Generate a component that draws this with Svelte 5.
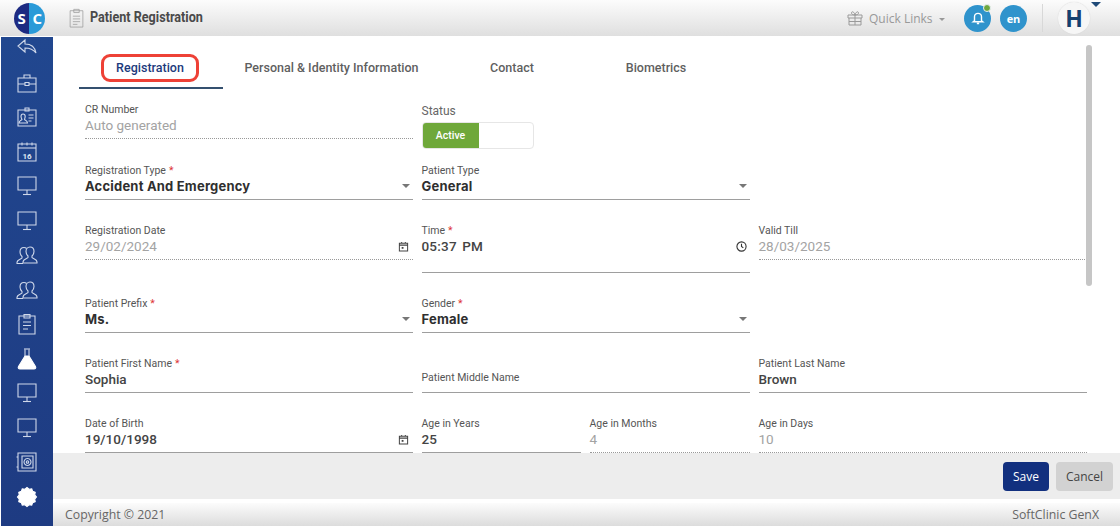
<script>
  const monitor = ['M3 3h18v13H3z', 'M12 16v4', 'M8 20.500h8'];
  const people = [
    'M15 4c2.500 0 4 2 4 4.500 0 2-1 3.500-2 4.500v1.500c.5 1 5 1.500 5 4.500v1H8v-1c0-3 4.500-3.500 5-4.500V13c-1-1-2-2.500-2-4.500C11 6 12.500 4 15 4z',
    'M11.500 5.500C10.800 4.800 10 4.500 9 4.500 6.500 4.500 5 6.500 5 9c0 2 1 3.500 2 4.500V15c-.5 1-5 1.500-5 4.500v1h6'
  ];
  const sideIcons = [
    { paths: ['M10 4 3 10l7 6v-4c5 0 8 1 11 5-1-6-5-9-11-9z'] },
    { paths: ['M3 7h18v14H3z', 'M9 7V4h6v3', 'M3 13h7M14 13h7', 'M10 11.500h4v3h-4z'] },
    { paths: ['M3 5h18v16H3z', 'M10 3h4v3h-4z', 'M13.500 10h5M13.500 13h5M13.500 16h3', 'M8 9c1.500 0 2.200 1.200 2.200 2.500S9.500 14 9.500 14.500c.5 1 3 1 3 3.500H4c0-2.500 2.500-2.500 3-3.500 0-.5-1-1.700-1-3S6.500 9 8 9z'] },
    { paths: ['M3 4h18v17H3z', 'M3 8h18', 'M7 2.500v3M12 2.500v3M17 2.500v3'], label: '16' },
    { paths: monitor },
    { paths: monitor },
    { paths: people },
    { paths: people },
    { paths: ['M4 4h16v18H4z', 'M9 2.500h6V6H9z', 'M8 10h8M8 13.500h8M8 17h5'] },
    { paths: ['M9 2h6', 'M10 2.500V9M14 2.500V9'], solid: 'M10 9h4l6.500 10.500c.7 1.300 0 2.500-1.500 2.500H5c-1.500 0-2.200-1.200-1.500-2.500z' },
    { paths: monitor },
    { paths: monitor },
    { paths: ['M3 3h18v18H3z', 'M3 7H1.500M3 17H1.500', 'M7 6h11v12H7z', 'M12.500 8.500a3.500 3.500 0 1 0 .01 0z', 'M12.500 10.800a1.200 1.200 0 1 0 .01 0z'] },
    { gear: true }
  ];
  const gearPoints = Array.from({ length: 24 }, (_, i) => {
    const r = i % 2 ? 8 : 9.5;
    const a = (i * Math.PI) / 12;
    return `${(12 + r * Math.cos(a)).toFixed(2)},${(12 + r * Math.sin(a)).toFixed(2)}`;
  }).join(' ');

  const tabs = [
    { label: 'Registration', w: 144, active: true },
    { label: 'Personal & Identity Information', w: 217 },
    { label: 'Contact', w: 144 },
    { label: 'Biometrics', w: 144 }
  ];
</script>

{#snippet field(label, value, opts = {})}
  <div class="field {opts.kind ?? 'text'}" class:tall={opts.tall}>
    <span class="label">{label}{#if opts.req}<i>*</i>{/if}</span>
    <div class="value">
      <span>{value}</span>
      {#if opts.kind === 'select'}<b class="caret"></b>{/if}
      {#if opts.icon === 'date'}
        <svg class="end" viewBox="0 0 24 24" width="11" height="11" fill="none" stroke="#444" stroke-width="2.200"><path d="M3 5h18v17H3zM3 9h18M8 2v4M16 2v4"/><path d="M8 13h4v4H8z" fill="#444" stroke="none"/></svg>
      {/if}
      {#if opts.icon === 'clock'}
        <svg class="end clock" viewBox="0 0 24 24" width="11" height="11" fill="none" stroke="#333" stroke-width="2.400"><circle cx="12" cy="12" r="10"/><path d="M12 6v6l4 3"/></svg>
      {/if}
    </div>
  </div>
{/snippet}

<div class="app">
  <header>
    <div class="logo"><span>S</span><span>C</span></div>
    <svg class="clip" viewBox="0 0 16 22" width="15" height="20" fill="none" stroke="#999" stroke-width="0.800"><path d="M1 3h14v18H1z"/><path d="M5 1.500h6V5H5zM4 9h8M4 12h8M4 15h8M4 18h5"/></svg>
    <h1>Patient Registration</h1>
    <div class="quick">
      <svg viewBox="0 0 16 16" width="16" height="16" fill="none" stroke="#9a9a9a" stroke-width="1"><path d="M1 5h14v3H1zM2 8v7h12V8M8 5v10M2 11.500h12M8 5C6 5 4 4 4.500 2.500S7.500 2 8 5c.5-3 3-4 3.500-2.500S10 5 8 5z"/></svg>
      <span>Quick Links</span>
      <b></b>
    </div>
    <div class="round bell">
      <svg viewBox="0 0 24 24" width="14" height="14" fill="none" stroke="#fff" stroke-width="2.400"><path d="M6 17V10a6 6 0 0 1 12 0v7l2 1.500H4zM10 21.500h4"/></svg>
      <em></em>
    </div>
    <div class="round lang">en</div>
    <div class="sep"></div>
    <div class="avatar">H</div>
    <b class="drop"></b>
  </header>

  <div class="body">
    <nav>
      {#each sideIcons as icon}
        <div class="side">
          <svg viewBox="0 0 24 24" width="24" height="24" fill="none" stroke="#cfd8ea" stroke-width="1.100">
            {#if icon.gear}
              <polygon points={gearPoints} fill="#fff" stroke="#fff" />
            {:else}
              {#if icon.solid}<path d={icon.solid} fill="#fff" stroke="#fff" />{/if}
              {#each icon.paths as d}<path {d} />{/each}
              {#if icon.label}<text x="12" y="18.500" text-anchor="middle">{icon.label}</text>{/if}
            {/if}
          </svg>
        </div>
      {/each}
    </nav>

    <main>
      <div class="content">
        <div class="tabs">
          {#each tabs as t}
            <div class="tab" class:active={t.active} style="width:{t.w}px"><span>{t.label}</span></div>
          {/each}
        </div>

        <div class="form">
          {@render field('CR Number', 'Auto generated', { kind: 'readonly' })}
          <div class="field status">
            <span class="label big">Status</span>
            <div class="toggle"><span>Active</span></div>
          </div>
          <div></div>

          {@render field('Registration Type', 'Accident And Emergency', { kind: 'select', req: true })}
          {@render field('Patient Type', 'General', { kind: 'select' })}
          <div></div>

          {@render field('Registration Date', '29/02/2024', { kind: 'readonly', icon: 'date' })}
          {@render field('Time', '05:37 PM', { req: true, icon: 'clock', tall: true })}
          {@render field('Valid Till', '28/03/2025', { kind: 'readonly' })}

          {@render field('Patient Prefix', 'Ms.', { kind: 'select', req: true })}
          {@render field('Gender', 'Female', { kind: 'select', req: true })}
          <div></div>

          {@render field('Patient First Name', 'Sophia', { req: true })}
          <div class="field text middle"><div class="value"><span class="label">Patient Middle Name</span></div></div>
          {@render field('Patient Last Name', 'Brown')}

          {@render field('Date of Birth', '19/10/1998', { icon: 'date' })}
          <div class="ages">
            {@render field('Age in Years', '25')}
            {@render field('Age in Months', '4', { kind: 'readonly' })}
          </div>
          {@render field('Age in Days', '10', { kind: 'readonly' })}
        </div>

        <div class="scroll"></div>
      </div>

      <div class="actions">
        <button class="save">Save</button>
        <button class="cancel">Cancel</button>
      </div>

      <footer>
        <span>Copyright © 2021</span>
        <span>SoftClinic GenX</span>
      </footer>
    </main>
  </div>
</div>

<style>
  :global(body) {
    margin: 0;
    background: #fff;
    font-family: Roboto, "Liberation Sans", sans-serif;
  }
  .app {
    width: 1120px;
    height: 526px;
    display: flex;
    flex-direction: column;
    overflow: hidden;
    position: relative;
  }

  header {
    height: 36px;
    flex: none;
    display: flex;
    align-items: center;
    padding-left: 14px;
    background: linear-gradient(#fcfcfc, #dfdfdf);
  }
  .logo {
    width: 31px;
    height: 31px;
    border-radius: 50%;
    display: flex;
    overflow: hidden;
    font: 700 15px "Open Sans", sans-serif;
    color: #fff;
    background: linear-gradient(90deg, #1d2a82 50%, #2a9ad8 50%);
  }
  .logo span {
    width: 50%;
    line-height: 31px;
    text-align: center;
  }
  .clip {
    margin-left: 24px;
  }
  h1 {
    margin: 0 0 2px 6px;
    font: 700 14.500px Roboto, sans-serif;
    color: #4a4a4a;
    transform: scaleX(0.87);
    transform-origin: left;
    width: 757px;
    white-space: nowrap;
  }
  .quick {
    display: flex;
    align-items: center;
    gap: 6px;
    width: 117px;
    font: 12px "Open Sans", sans-serif;
    color: #999;
  }
  .quick b {
    border: 3px solid transparent;
    border-top: 3px solid #999;
    border-bottom: 0;
    margin-top: 3px;
  }
  .round {
    width: 27px;
    height: 27px;
    border-radius: 50%;
    background: #2f93cc;
    display: flex;
    align-items: center;
    justify-content: center;
    position: relative;
    color: #fff;
    font: 700 11px "Open Sans", sans-serif;
  }
  .lang {
    margin-left: 9px;
  }
  .bell em {
    position: absolute;
    top: -1px;
    right: 0;
    width: 6px;
    height: 6px;
    border-radius: 50%;
    background: #6fa83f;
    border: 1px solid #e9f0f3;
  }
  .sep {
    width: 1px;
    height: 28px;
    margin-left: 15px;
    background: #d8d8d8;
  }
  .avatar {
    width: 32px;
    height: 32px;
    margin-left: 15px;
    border-radius: 50%;
    background: #f6f6f6;
    box-shadow: 0 0 1px #ccc;
    color: #15406f;
    font: 700 23px/32px "Open Sans", sans-serif;
    text-align: center;
  }
  .drop {
    position: absolute;
    left: 1091px;
    top: 2px;
    border: 5px solid transparent;
    border-top: 5px solid #1f4a78;
    border-bottom: 0;
  }

  .body {
    flex: 1;
    min-height: 0;
    display: flex;
  }
  nav {
    width: 52px;
    margin: 1px 0 0 1px;
    flex: none;
    background: linear-gradient(#21478f, #1e3b82);
    overflow: hidden;
  }
  .side {
    height: 34.500px;
    display: flex;
    align-items: center;
    justify-content: center;
  }
  .side:first-child {
    margin-top: -6px;
  }
  .side text {
    font: 700 8px Roboto, sans-serif;
    fill: #dfe5f2;
    stroke: none;
  }

  main {
    flex: 1;
    min-width: 0;
    display: flex;
    flex-direction: column;
  }
  .content {
    flex: 1;
    min-height: 0;
    overflow: hidden;
    position: relative;
    padding: 14px 0 0 26px;
    box-sizing: border-box;
  }
  .scroll {
    position: absolute;
    left: 1033px;
    top: 9px;
    width: 6px;
    height: 241px;
    border-radius: 3px;
    background: #c6c6c6;
  }

  .tabs {
    display: flex;
    height: 39px;
    font-size: 12.500px;
    color: #5f5f5f;
  }
  .tab {
    height: 35px;
    padding-bottom: 2px;
    display: flex;
    align-items: center;
    justify-content: center;
    font-weight: 500;
    white-space: nowrap;
  }
  .tab.active {
    border-bottom: 2px solid #34506f;
    color: #1c3a7c;
  }
  .tab.active span {
    padding: 3.500px 12px;
    margin-right: 2px;
    border: 3px solid #ee4136;
    border-radius: 9px;
  }

  .form {
    display: grid;
    grid-template-columns: 327.500px 328px 328px;
    column-gap: 9px;
    margin-left: 6px;
    padding-top: 14px;
  }
  .field {
    display: flex;
    flex-direction: column;
    height: 60px;
  }
  .label {
    font-size: 10.500px;
    line-height: 14px;
    font-weight: 400;
    color: #555;
    white-space: nowrap;
  }
  .label.big {
    font-size: 12px;
    color: #666;
  }
  .label i {
    margin-left: 3px;
    color: #d33;
    font-style: normal;
  }
  .value {
    display: flex;
    align-items: center;
    justify-content: space-between;
    height: 22px;
    font-size: 13.500px;
    font-weight: 500;
    color: #444;
    border-bottom: 1px solid #9e9e9e;
    box-sizing: border-box;
    padding-bottom: 5px;
  }
  .tall {
    height: 73px;
  }
  .tall .value {
    height: 35px;
    padding-bottom: 18px;
    word-spacing: 2px;
    letter-spacing: 0.2px;
  }
  .readonly .value {
    font-weight: 400;
    color: #a3a3a3;
    border-bottom: 1px dotted #999;
  }
  .select .value {
    font: 700 13px Inter, sans-serif;
    color: #2f2f2f;
    letter-spacing: 0.2px;
  }
  .caret {
    border: 4.500px solid transparent;
    border-top: 4.500px solid #777;
    border-bottom: 0;
    margin-right: 3px;
  }
  .end {
    margin-right: 4px;
  }
  .end.clock {
    margin-right: 3px;
  }
  .middle .value {
    height: 36px;
    align-items: flex-end;
    padding-bottom: 7px;
  }
  .ages {
    display: grid;
    grid-template-columns: 159px 160px;
    column-gap: 9px;
  }
  .status {
    margin-top: 1px;
  }
  .toggle {
    width: 112px;
    height: 27px;
    margin-top: 4px;
    border: 1px solid #e6e6e6;
    border-radius: 4px;
    box-sizing: border-box;
    overflow: hidden;
  }
  .toggle span {
    display: block;
    width: 56px;
    height: 100%;
    background: #6fa83a;
    color: #fff;
    font-size: 10.500px;
    font-weight: 500;
    line-height: 25px;
    text-align: center;
  }

  .actions {
    height: 46px;
    flex: none;
    background: #ededed;
    display: flex;
    align-items: center;
    justify-content: flex-end;
    gap: 7px;
    padding-right: 7px;
  }
  button {
    height: 29px;
    border: 0;
    border-radius: 4px;
    font: 12px "Open Sans", sans-serif;
    padding: 0;
  }
  .save {
    width: 46px;
    background: #12307f;
    color: #fff;
  }
  .cancel {
    width: 57px;
    background: #d2d2d2;
    color: #444;
  }

  footer {
    height: 23px;
    flex: none;
    margin-top: 4px;
    box-sizing: border-box;
    padding: 0 21px 0 12px;
    display: flex;
    align-items: center;
    justify-content: space-between;
    background: linear-gradient(#fcfcfc, #dcdcdc);
    font: 12.300px "Open Sans", sans-serif;
    color: #666;
  }
</style>
